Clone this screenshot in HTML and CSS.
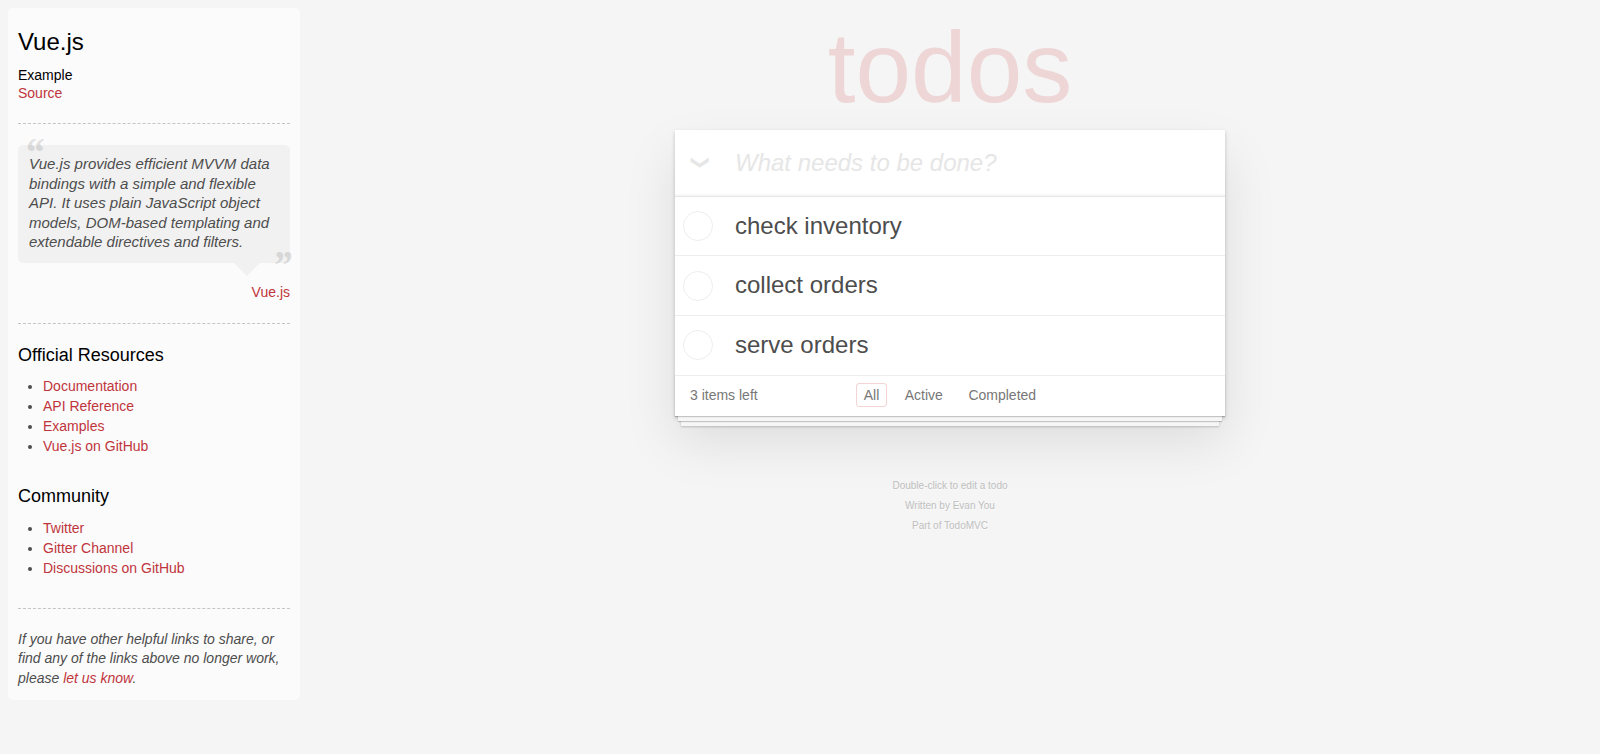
FILE: index.html
```html
<!DOCTYPE html>
<html lang="en">
<head>
    <meta charset="UTF-8">
    <title>Vue.js • TodoMVC</title>
    <link rel="stylesheet" href="styles.css">
</head>
<body>

<aside class="learn">
    <header>
        <h3>Vue.js</h3>
        <span class="source-links">
            <h5>Example</h5>
            <a href="#">Source</a>
        </span>
    </header>
    <hr>
    <blockquote class="quote">
        <p>Vue.js provides efficient MVVM data bindings with a simple and flexible API. It uses plain JavaScript object models, DOM-based templating and extendable directives and filters.</p>
        <footer><a href="#">Vue.js</a></footer>
    </blockquote>
    <hr>
    <h4>Official Resources</h4>
    <ul>
        <li><a href="#">Documentation</a></li>
        <li><a href="#">API Reference</a></li>
        <li><a href="#">Examples</a></li>
        <li><a href="#">Vue.js on GitHub</a></li>
    </ul>
    <h4 class="community">Community</h4>
    <ul>
        <li><a href="#">Twitter</a></li>
        <li><a href="#">Gitter Channel</a></li>
        <li><a href="#">Discussions on GitHub</a></li>
    </ul>
    <footer class="learn-footer">
        <hr>
        <em>If you have other helpful links to share, or find any of the links above no longer work, please <a href="#">let us know</a>.</em>
    </footer>
</aside>

<main class="main">
    <h1 class="title">todos</h1>
    <section class="todoapp">
        <div class="new-row">
            <span class="toggle-all">❯</span>
            <input class="new-todo" placeholder="What needs to be done?">
        </div>
        <ul class="todo-list">
            <li class="todo">
                <svg class="check" width="30" height="30" viewBox="0 0 30 30"><circle cx="15" cy="15" r="14.5" fill="none" stroke="#ededed"/></svg>
                <label>check inventory</label>
            </li>
            <li class="todo">
                <svg class="check" width="30" height="30" viewBox="0 0 30 30"><circle cx="15" cy="15" r="14.5" fill="none" stroke="#ededed"/></svg>
                <label>collect orders</label>
            </li>
            <li class="todo">
                <svg class="check" width="30" height="30" viewBox="0 0 30 30"><circle cx="15" cy="15" r="14.5" fill="none" stroke="#ededed"/></svg>
                <label>serve orders</label>
            </li>
        </ul>
        <footer class="app-footer">
            <span class="count">3 items left</span>
            <ul class="filters">
                <li><a class="selected" href="#">All</a></li>
                <li><a href="#">Active</a></li>
                <li><a href="#">Completed</a></li>
            </ul>
        </footer>
    </section>
    <footer class="info">
        <p>Double-click to edit a todo</p>
        <p>Written by Evan You</p>
        <p>Part of TodoMVC</p>
    </footer>
</main>

</body>
</html>
```

FILE: styles.css
```css
* {
    box-sizing: border-box;
}
body {
    margin: 0;
    display: flex;
    align-items: flex-start;
    min-height: 754px;
    overflow: hidden;
    background-color: #f5f5f5;
    color: #4d4d4d;
    font-family: "Liberation Sans", Arial, sans-serif;
    font-size: 14px;
    line-height: 1.4;
}
a {
    color: #c0353b;
    text-decoration: none;
}

/* sidebar */
.learn {
    flex: none;
    width: 292px;
    height: 692px;
    margin: 8px 0 0 8px;
    padding: 10px;
    background-color: rgba(255, 255, 255, 0.6);
    border-radius: 5px;
}
.learn h3 {
    margin: 7px 0 0;
    color: #000;
    font-size: 24px;
    font-weight: normal;
    line-height: 34px;
}
.learn h5 {
    margin: 7px 0 0;
    color: #000;
    font-size: 14px;
    font-weight: normal;
    line-height: 18px;
}
.source-links a {
    display: block;
    line-height: 18px;
}
.learn hr {
    margin: 21px 0;
    height: 0;
    border: 0;
    border-top: 1px dashed #c5c5c5;
}
.quote {
    position: relative;
    margin: 0;
}
.quote p {
    position: relative;
    margin: 0;
    padding: 9px 10px 11px 11px;
    background-color: rgba(0, 0, 0, 0.04);
    border-radius: 5px;
    font-size: 15px;
    font-style: italic;
    line-height: 19.5px;
}
.quote p:before,
.quote p:after {
    position: absolute;
    color: #000;
    opacity: 0.1;
    font-family: "Liberation Serif", Georgia, serif;
    font-size: 40px;
    font-style: italic;
    font-weight: bold;
    line-height: 40px;
}
.quote p:before {
    content: "“";
    left: 6px;
    top: -12px;
}
.quote p:after {
    content: "”";
    right: -2px;
    bottom: -22px;
}
.quote footer {
    position: relative;
    padding-top: 20px;
    text-align: right;
}
.quote footer:before {
    content: "";
    position: absolute;
    top: 0;
    right: 30px;
    border: 13px solid transparent;
    border-top-color: rgba(0, 0, 0, 0.04);
    border-bottom: 0;
}
.learn h4 {
    margin: 21px 0 9.5px;
    color: #000;
    font-size: 18px;
    font-weight: normal;
    line-height: 21px;
}
.learn h4.community {
    margin-bottom: 11px;
}
.learn ul {
    margin: 0 0 30px;
    padding-left: 25px;
}
.learn li {
    line-height: 20px;
}
.learn-footer hr {
    margin-top: 21.5px;
}

/* todo app */
.main {
    flex: 1;
    display: flex;
    flex-direction: column;
    align-items: center;
}
.title {
    margin: 0;
    height: 130px;
    color: rgba(200, 40, 40, 0.15);
    font-size: 100px;
    font-weight: normal;
    line-height: 134px;
}
.todoapp {
    position: relative;
    width: 550px;
    background-color: #fff;
    box-shadow: 0 2px 4px 0 rgba(0, 0, 0, 0.2), 0 25px 50px 0 rgba(0, 0, 0, 0.1);
}
.new-row {
    display: flex;
    align-items: center;
    height: 67px;
    border-bottom: 1px solid #e6e6e6;
    box-shadow: inset 0 -2px 1px rgba(0, 0, 0, 0.03);
}
.toggle-all {
    width: 50px;
    margin-right: 10px;
    color: #e6e6e6;
    font-size: 18px;
    text-align: center;
    transform: rotate(90deg);
}
.new-todo {
    flex: 1;
    padding: 0;
    border: 0;
    background: none;
    font-family: inherit;
    font-size: 24px;
    font-style: italic;
    outline: none;
}
.new-todo::placeholder {
    color: #e6e6e6;
    opacity: 1;
}
.todo-list {
    margin: 0;
    padding: 0;
    list-style: none;
}
.todo {
    display: flex;
    align-items: center;
    height: 59.4px;
    padding-left: 8px;
    border-bottom: 1px solid #ededed;
}
.todo:last-child {
    height: 60px;
}
.check {
    flex: none;
}
.todo label {
    padding-left: 22px;
    font-size: 24px;
    line-height: 1.2;
}
.app-footer {
    position: relative;
    display: flex;
    align-items: center;
    height: 40px;
    padding: 0 15px;
    color: #777;
    font-size: 14px;
    box-shadow: 0 1px 1px rgba(0, 0, 0, 0.2), 0 8px 0 -3px #f6f6f6, 0 9px 1px -3px rgba(0, 0, 0, 0.2), 0 16px 0 -6px #f6f6f6, 0 17px 2px -6px rgba(0, 0, 0, 0.2);
}
.filters {
    display: flex;
    gap: 9.5px;
    margin: 0 0 2px 98px;
    padding: 0;
    list-style: none;
}
.filters a {
    display: block;
    padding: 3px 7px;
    border: 1px solid transparent;
    border-radius: 3px;
    color: inherit;
    line-height: 16px;
}
.filters a.selected {
    border-color: rgba(200, 40, 40, 0.2);
}
.info {
    margin-top: 65px;
    color: #bfbfbf;
    font-size: 10px;
    line-height: 1;
    text-align: center;
    text-shadow: 0 1px 0 rgba(255, 255, 255, 0.5);
}
.info p {
    margin: 0 0 10px;
}
```
